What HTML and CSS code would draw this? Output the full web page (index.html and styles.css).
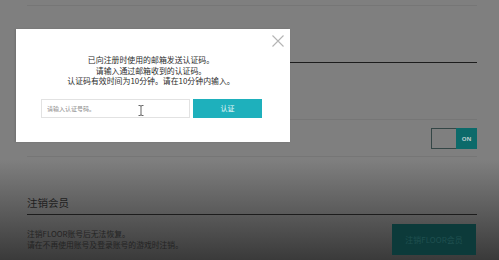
FILE: index.html
```html
<!DOCTYPE html>
<html lang="zh">
<head>
<meta charset="utf-8">
<link rel="stylesheet" href="styles.css">
</head>
<body>
<div class="page">
  <div class="rule rule-top"></div>
  <div class="rule-dark rule-email"></div>
  <div class="rule rule-a"></div>
  <div class="toggle-row">
    <div class="toggle"><span class="t-off"></span><span class="t-on">ON</span></div>
  </div>
  <div class="rule rule-b"></div>
  <div class="section">
    <h2 class="sec-title">注销会员</h2>
    <div class="rule-dark"></div>
    <div class="sec-row">
      <p class="sec-text">注销FLOOR账号后无法恢复。<br>请在不再使用账号及登录账号的游戏时注销。</p>
      <button class="btn-dark">注销FLOOR会员</button>
    </div>
  </div>
</div>

<div class="modal">
  <svg class="close" width="12" height="12" viewBox="0 0 12 12"><path d="M0.5 0.5 L11.5 11.5 M11.5 0.5 L0.5 11.5" stroke="#b4b4b4" stroke-width="1.1" fill="none"/></svg>
  <p class="msg">已向注册时使用的邮箱发送认证码。<br>请输入通过邮箱收到的认证码。<br>认证码有效时间为10分钟。请在10分钟内输入。</p>
  <div class="form">
    <input class="code" type="text" placeholder="请输入认证号码。">
    <button class="btn-verify">认证</button>
  </div>
  <svg class="ibeam" width="6" height="11" viewBox="0 0 6 11"><path d="M0.5 0.5 H2 M4 0.5 H5.5 M2 0.5 Q3 0.5 3 1.5 V9.5 Q3 10.5 2 10.5 M4 0.5 Q3 0.5 3 1.5 M3 9.5 Q3 10.5 4 10.5 M0.5 10.5 H2 M4 10.5 H5.5" stroke="#666" stroke-width="1" fill="none"/></svg>
</div>
</body>
</html>
```
FILE: styles.css
```css
* { box-sizing: border-box; }
html, body { margin: 0; padding: 0; }
body {
  width: 499px;
  height: 260px;
  overflow: hidden;
  position: relative;
  font-family: "Noto Sans CJK SC", "Noto Sans", sans-serif;
  background: linear-gradient(to bottom, #7f7f7f 0, #7f7f7f 160px, #3a3a3a 260px);
}
.page {
  margin-left: 27px;
  width: 450px;
  display: flex;
  flex-direction: column;
}
.rule { height: 1px; background: #767676; }
.rule-top { margin-top: 5px; }
.rule-dark { height: 1px; background: #1c1c1c; }
.rule-email { margin-top: 56px; }
.rule-a { margin-top: 56px; }
.toggle-row {
  display: flex;
  justify-content: flex-end;
  padding-top: 8px;
  height: 36px;
}
.toggle {
  display: flex;
  width: 46px;
  height: 21px;
}
.t-off {
  flex: 1;
  border: 1px solid #344646;
  border-right: none;
}
.t-on {
  width: 21px;
  background: #0c6a6a;
  color: #b9cccc;
  font-family: "Open Sans", sans-serif;
  font-size: 6px;
  font-weight: 700;
  display: flex;
  align-items: center;
  justify-content: center;
}
.section { margin-top: 38px; }
.sec-title {
  margin: 0;
  font-size: 10.5px;
  font-weight: 400;
  color: #1e1e1e;
  line-height: 15px;
  height: 19px;
}
.sec-row {
  display: flex;
  justify-content: space-between;
  align-items: flex-start;
  padding-top: 9px;
}
.sec-text {
  margin: 4px 0 0;
  font-size: 7.8px;
  line-height: 11px;
  color: #232323;
}
.btn-dark {
  width: 84px;
  height: 31px;
  margin-right: 1px;
  border: none;
  background: #0c3a3a;
  color: #1f5050;
  font-family: "Noto Sans CJK SC", sans-serif;
  font-size: 8px;
  padding: 0;
}
.modal {
  position: absolute;
  left: 16px;
  top: 29px;
  width: 274px;
  height: 113px;
  background: #fff;
  box-shadow: -1px 0 2px rgba(0,0,0,0.12);
}
.close { position: absolute; left: 256px; top: 6px; }
.msg {
  margin: 0;
  padding-top: 26px;
  padding-right: 4px;
  text-align: center;
  font-size: 7.9px;
  line-height: 10.5px;
  color: #2c2c2c;
}
.form {
  display: flex;
  gap: 3px;
  margin-top: 12px;
  padding-left: 25px;
}
.code {
  width: 149px;
  height: 19px;
  border: 1px solid #e2e2e2;
  padding: 0 0 0 5px;
  font-family: "Noto Sans CJK SC", sans-serif;
  font-size: 6px;
  outline: none;
}
.code::placeholder { color: #8a8a8a; }
.btn-verify {
  width: 69px;
  height: 19px;
  border: none;
  background: #1eb0bc;
  color: #eafafa;
  font-family: "Noto Sans CJK SC", sans-serif;
  font-size: 7px;
  padding: 0;
}
.ibeam { position: absolute; left: 122px; top: 76px; }
```
